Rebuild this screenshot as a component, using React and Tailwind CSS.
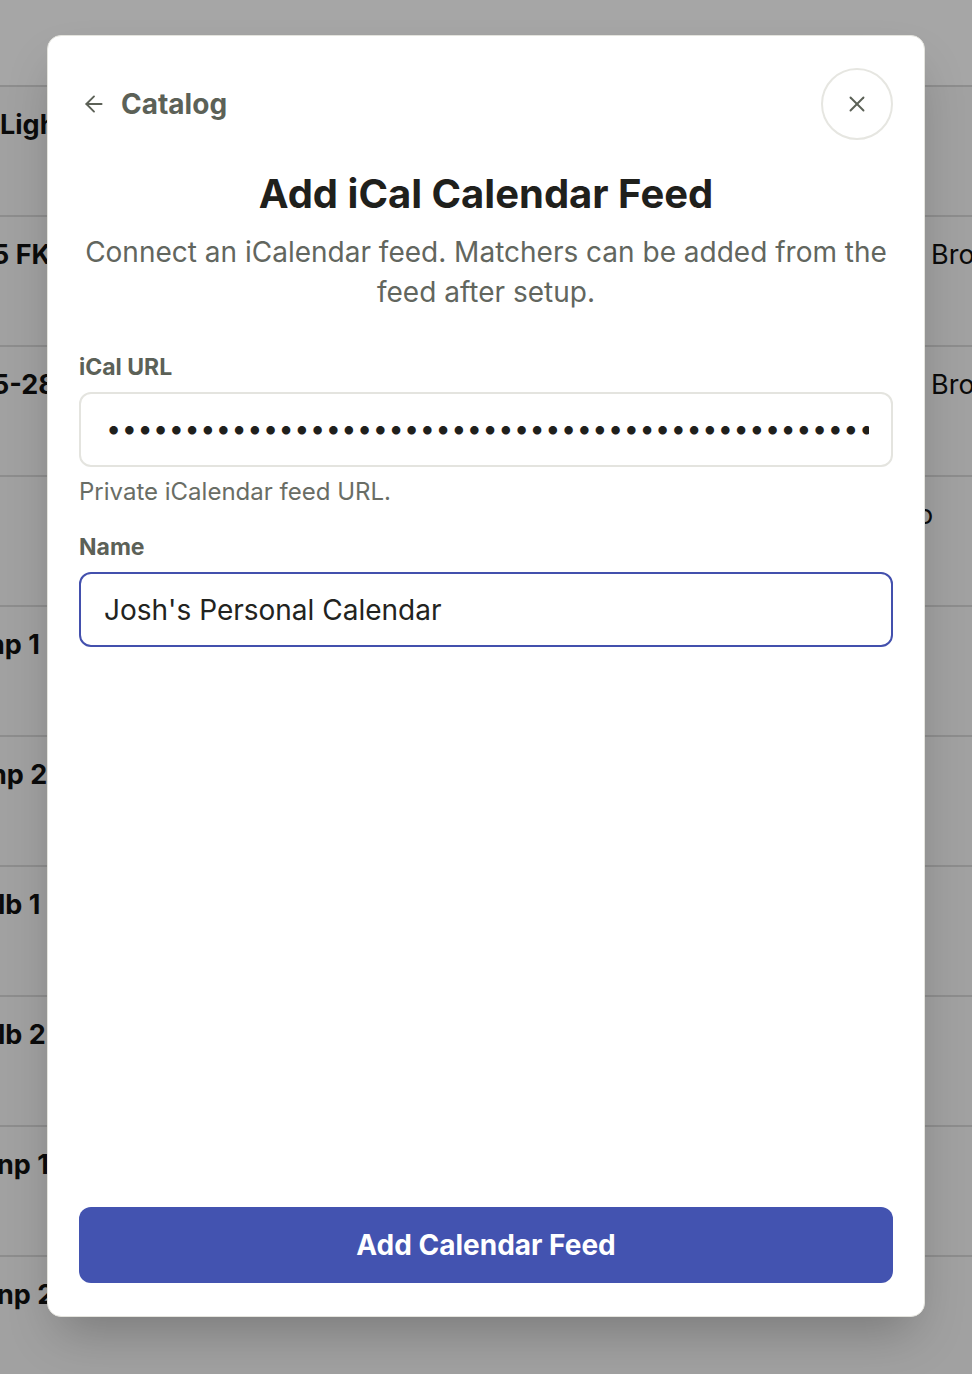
import { ArrowLeft, X } from "lucide-react";

const rows = [
  { left: "Light", leftShift: "ml-0", right: "", rightShift: "ml-0" },
  { left: "5 FK", leftShift: "-ml-[8px]", right: "Bro", rightShift: "ml-0" },
  { left: "5-28", leftShift: "-ml-[8px]", right: "Bro", rightShift: "ml-0" },
  { left: "", leftShift: "ml-0", right: "o", rightShift: "-ml-[14px]" },
  { left: "np 1", leftShift: "-ml-[12px]", right: "", rightShift: "ml-0" },
  { left: "np 2", leftShift: "-ml-[10px]", right: "", rightShift: "ml-0" },
  { left: "lb 1", leftShift: "-ml-[2px]", right: "", rightShift: "ml-0" },
  { left: "lb 2", leftShift: "-ml-[2px]", right: "", rightShift: "ml-0" },
  { left: "np 1", leftShift: "-ml-[3px]", right: "", rightShift: "ml-0" },
  { left: "np 2", leftShift: "-ml-[3px]", right: "", rightShift: "ml-0" },
];

function Backdrop() {
  return (
    <div className="min-h-[1374px] w-full bg-white">
      <div className="h-[87px] border-b-2 border-[#d9d9d9] bg-white" />
      {rows.map((row, i) => (
        <div
          key={i}
          className="flex h-[130px] items-start justify-between border-b-2 border-[#d9d9d9] bg-[#f7f7f7] pt-[18px]"
        >
          <span
            className={`whitespace-nowrap text-[27px] font-bold text-[#111] ${row.leftShift}`}
          >
            {row.left}
          </span>
          <div className="w-[41px]">
            <span className={`block whitespace-nowrap text-[27px] text-[#111] ${row.rightShift}`}>
              {row.right}
            </span>
          </div>
        </div>
      ))}
    </div>
  );
}

export default function App() {
  const dots = "•".repeat(60);

  return (
    <div className="relative h-[1374px] w-[972px] overflow-hidden font-['Inter',sans-serif]">
      <Backdrop />
      <div className="absolute inset-0 flex justify-center bg-black/35 pt-[35px]">
        <div className="flex h-[1282px] w-[878px] flex-col rounded-[14px] border border-[#e4e4de] bg-white px-[31px] pb-[33px] pt-[32px] shadow-2xl">
          <div className="flex items-center justify-between">
            <button className="flex items-center gap-[14px] pl-[2px] text-[#5c6157]">
              <ArrowLeft className="h-[26px] w-[26px]" strokeWidth={1.75} />
              <span className="text-[28px] font-bold">Catalog</span>
            </button>
            <button className="flex h-[72px] w-[72px] items-center justify-center rounded-full border-2 border-[#e6e6e1] text-[#5c6157]">
              <X className="h-[26px] w-[26px]" strokeWidth={1.75} />
            </button>
          </div>

          <h1 className="mt-[28px] text-center text-[40px] font-bold leading-[52px] text-[#1f201c]">
            Add iCal Calendar Feed
          </h1>
          <p className="mt-[12px] text-center text-[28px] leading-[40px] text-[#62665e]">
            Connect an iCalendar feed. Matchers can be added from the feed after setup.
          </p>

          <label className="mt-[40px] text-[23px] font-bold leading-[30px] text-[#5c6157]">
            iCal URL
          </label>
          <div className="mt-[10px] flex h-[75px] items-center rounded-[12px] border-2 border-[#e4e4df] pl-[25px] pr-[22px]">
            <div className="flex-1 overflow-hidden">
              <span className="whitespace-nowrap text-[27px] tracking-[0.5px] text-[#1f201c]">
                {dots}
              </span>
            </div>
          </div>
          <p className="mt-[9px] text-[24px] leading-[32px] text-[#696d65]">
            Private iCalendar feed URL.
          </p>

          <label className="mt-[24px] text-[23px] font-bold leading-[30px] text-[#5c6157]">
            Name
          </label>
          <div className="mt-[10px] flex h-[75px] items-center rounded-[12px] border-2 border-[#4350ad] px-[23px]">
            <span className="text-[28px] text-[#222320]">Josh's Personal Calendar</span>
          </div>

          <div className="flex-1" />

          <button className="h-[76px] w-full rounded-[12px] bg-[#4353b0] text-[28px] font-bold text-white">
            Add Calendar Feed
          </button>
        </div>
      </div>
    </div>
  );
}
